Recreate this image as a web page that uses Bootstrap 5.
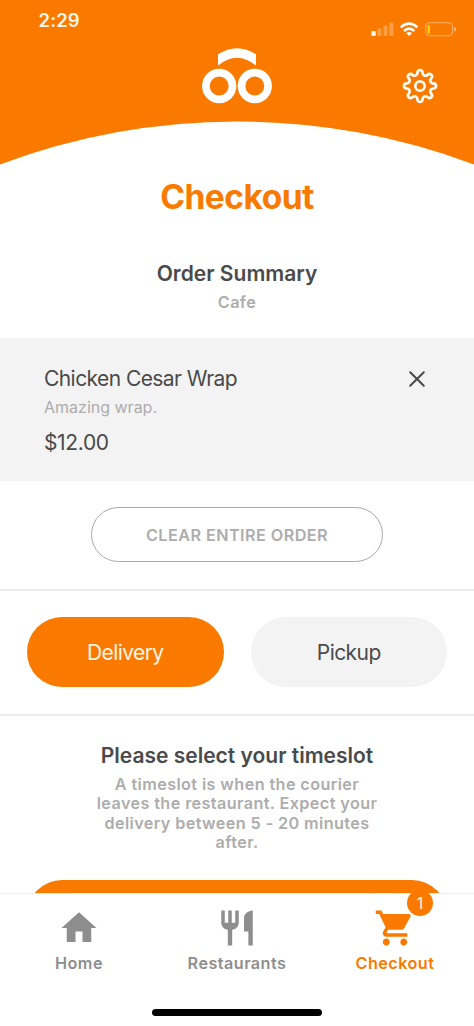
<!DOCTYPE html>
<html lang="en">
<head>
<meta charset="utf-8">
<meta name="viewport" content="width=device-width, initial-scale=1">
<title>Checkout</title>
<link href="https://cdn.jsdelivr.net/npm/bootstrap@5.3.0/dist/css/bootstrap.min.css" rel="stylesheet">
<style>
:root{--brand:#fa7a00;--ink:#4a4a4b;--muted:#adadad;--soft:#f3f3f3}
body{font-family:Inter,"Liberation Sans",sans-serif;color:var(--ink);height:1026px;overflow:hidden;background:#fff}
.hero{height:165px}
.hero-bg{inset:0;z-index:-1}
.status{height:40px;padding:10px 17px 0 38.5px}
.clock{font-size:18.5px;font-weight:600;line-height:21px;letter-spacing:.1px;color:#fff5e6}
.brand-row{padding:7px 36px 0;height:66px}
.side-space{width:36px}
.gear{margin-top:21px}
.page-title{font-size:33.5px;font-weight:700;line-height:42px;letter-spacing:-.5px;color:var(--brand);margin-top:11px}
.section-title{font-size:21px;font-weight:600;line-height:26px}
.summary-title{margin-top:43px}
.sub-text{font-size:16.2px;font-weight:600;line-height:19.6px;letter-spacing:.4px;color:var(--muted);margin-top:6px}
.order-item{background:var(--soft);height:143px;padding:27px 44px 0;margin-top:25px}
.item-name{font-size:21px;line-height:28px;letter-spacing:-.57px}
.item-name.price{letter-spacing:-.35px;margin-top:12px}
.item-note{font-size:16px;line-height:20px;color:var(--muted);margin-top:4px}
.remove{margin-top:4px}
.pill{border-radius:50rem;height:70px;font-size:21px;letter-spacing:-.57px;padding-top:3px}
.pill-on{background:var(--brand);color:#fff5e8}
.pill-off{background:var(--soft);color:var(--ink)}
.clear-wrap{padding:26px 0 27px}
.clear-btn{width:292px;height:55px;border:1px solid #a9a9a9;border-radius:50rem;color:var(--muted);font-size:16.2px;font-weight:600;letter-spacing:.45px;padding-top:4px}
.rule-line{border-top:2px solid #ececec}
.mode-row{padding:26px 27px 27px;gap:27px}
.slot-title{padding-top:27px}
.slot-btn{height:70px;border-radius:35px;background:var(--brand);margin:27px 27px 0}
.tabs{height:133px;border-top:1px solid #eee;background:#fff}
.tab-item{color:#8e8e8f;font-size:16.2px;font-weight:600;line-height:20px;letter-spacing:.45px;padding-top:12.6px;gap:4.4px}
.tab-item.active{color:var(--brand)}
.count{width:26px;height:26px;background:var(--brand);color:#fff5e8;font-size:16px;font-weight:400;line-height:26px;letter-spacing:0;left:91px;top:-4px}
.home-bar{width:170px;height:7px;background:#000;border-radius:4px;bottom:10px}
</style>
</head>
<body class="d-flex flex-column">
<header class="hero position-relative flex-shrink-0">
  <svg class="hero-bg position-absolute" width="474" height="165" viewBox="0 0 474 165"><path fill="#fa7a00" d="M0 0H474V164.500A674.600 674.600 0 0 0 0 164.500Z"/></svg>
  <div class="status d-flex justify-content-between">
    <span class="clock">2:29</span>
    <svg width="87" height="30" viewBox="370 10 87 30">
      <g fill="#fff5e6"><rect x="371.300" y="31" width="4.400" height="5" rx="1"/><g opacity=".3"><rect x="377.500" y="28.500" width="4" height="7.500" rx="1"/><rect x="383.500" y="25.500" width="4" height="10.500" rx="1"/><rect x="389.300" y="22.500" width="4" height="13.500" rx="1"/></g></g>
      <g fill="none" stroke="#fff" stroke-width="2.600"><path d="M400.800 27.400Q409 19.800 417.400 27.400"/><path d="M404 31Q409 26.300 414.400 31"/></g><path fill="#fff" d="M406.200 33.300Q409.100 30.900 412 33.300L409.100 36Z"/>
      <rect x="425.700" y="22.700" width="26.800" height="13" rx="3.800" fill="none" stroke="#ffc387" stroke-opacity=".8" stroke-width="1.100"/><rect x="427.700" y="24.700" width="2.200" height="9" rx="1" fill="#ffd60a"/><path fill="#ffc387" d="M454.200 27Q456 27.300 456 29.200T454.200 31.500Z"/>
    </svg>
  </div>
  <div class="brand-row d-flex justify-content-between align-items-start">
    <span class="side-space"></span>
    <svg width="72" height="58" viewBox="201 47 72 58"><g fill="none" stroke="#fff" stroke-width="7.700"><circle cx="219.200" cy="86" r="13.300"/><circle cx="254.800" cy="86" r="13.300"/></g><path fill="#fff" d="M218 54.300Q237 42 256 54.300V65.500Q237 49.800 218 65.500Z"/></svg>
    <svg class="gear" width="36" height="36" viewBox="-18 -18 36 36"><defs><path id="tooth" d="M13.040-2.600C17-2.400 17 2.400 13.040 2.600C10.565 2.720 9.390 5.550 11.050 7.390"/></defs><g fill="none" stroke="#fffaf2" stroke-width="2.700" stroke-linecap="round"><circle r="4.700"/><use href="#tooth"/><use href="#tooth" transform="rotate(45)"/><use href="#tooth" transform="rotate(90)"/><use href="#tooth" transform="rotate(135)"/><use href="#tooth" transform="rotate(180)"/><use href="#tooth" transform="rotate(225)"/><use href="#tooth" transform="rotate(270)"/><use href="#tooth" transform="rotate(315)"/></g></svg>
  </div>
</header>
<main class="text-center flex-grow-1 overflow-hidden">
  <h1 class="page-title mb-0">Checkout</h1>
  <h2 class="section-title summary-title mb-0">Order Summary</h2>
  <p class="sub-text mb-0">Cafe</p>
  <section class="order-item text-start d-flex justify-content-between">
    <div><div class="item-name">Chicken Cesar Wrap</div><div class="item-note">Amazing wrap.</div><div class="item-name price">$12.00</div></div>
    <svg class="remove" width="23" height="20" viewBox="-10 -10 23 20"><path d="M-6.800-6.800 6.800 6.800M6.800-6.800-6.800 6.800" stroke="#4a4a4b" stroke-width="2" stroke-linecap="round"/></svg>
  </section>
  <div class="clear-wrap d-flex justify-content-center"><button class="clear-btn bg-transparent">CLEAR ENTIRE ORDER</button></div>
  <div class="rule-line mode-row d-flex"><button class="pill pill-on border-0 w-100">Delivery</button><button class="pill pill-off border-0 w-100">Pickup</button></div>
  <section class="rule-line slot-title"><h2 class="section-title mb-0">Please select your timeslot</h2>
  <p class="sub-text mb-0">A timeslot is when the courier<br>leaves the restaurant. Expect your<br>delivery between 5 - 20 minutes<br>after.</p></section>
  <div class="slot-btn"></div>
</main>
<nav class="tabs d-flex position-relative flex-shrink-0">
  <a class="tab-item col-4 text-decoration-none d-flex flex-column align-items-center"><svg width="42" height="42" viewBox="0 0 24 24" fill="currentColor"><path d="M10 20v-6h4v6h5v-8h3L12 3 2 12h3v8z"/></svg><span>Home</span></a>
  <a class="tab-item col-4 text-decoration-none d-flex flex-column align-items-center"><svg width="42" height="42" viewBox="0 0 24 24" fill="currentColor"><path d="M11 9H9V2H7v7H5V2H3v7c0 2.120 1.660 3.840 3.750 3.970V22h2.500v-9.030C11.340 12.840 13 11.120 13 9V2h-2v7zm5-3v8h2.500v8H21V2c-2.760 0-5 2.240-5 4z"/></svg><span>Restaurants</span></a>
  <a class="tab-item active col-4 text-decoration-none d-flex flex-column align-items-center position-relative"><svg width="42" height="42" viewBox="0 0 24 24" fill="currentColor"><path d="M7 18c-1.100 0-1.990.9-1.990 2S5.900 22 7 22s2-.9 2-2-.9-2-2-2zM1 2v2h2l3.600 7.590-1.350 2.450c-.16.280-.25.610-.25.960 0 1.100.9 2 2 2h12v-2H7.420c-.14 0-.25-.11-.25-.25l.03-.12.900-1.630h7.450c.75 0 1.410-.41 1.750-1.030l3.580-6.490c.08-.14.120-.31.120-.48 0-.55-.45-1-1-1H5.210l-.94-2H1zm16 16c-1.100 0-1.990.9-1.990 2s.89 2 1.990 2 2-.9 2-2-.9-2-2-2z"/></svg><span>Checkout</span><span class="count rounded-circle text-center position-absolute">1</span></a>
  <div class="home-bar position-absolute start-50 translate-middle-x"></div>
</nav>
<script src="https://cdn.jsdelivr.net/npm/bootstrap@5.3.0/dist/js/bootstrap.bundle.min.js"></script>
</body>
</html>
